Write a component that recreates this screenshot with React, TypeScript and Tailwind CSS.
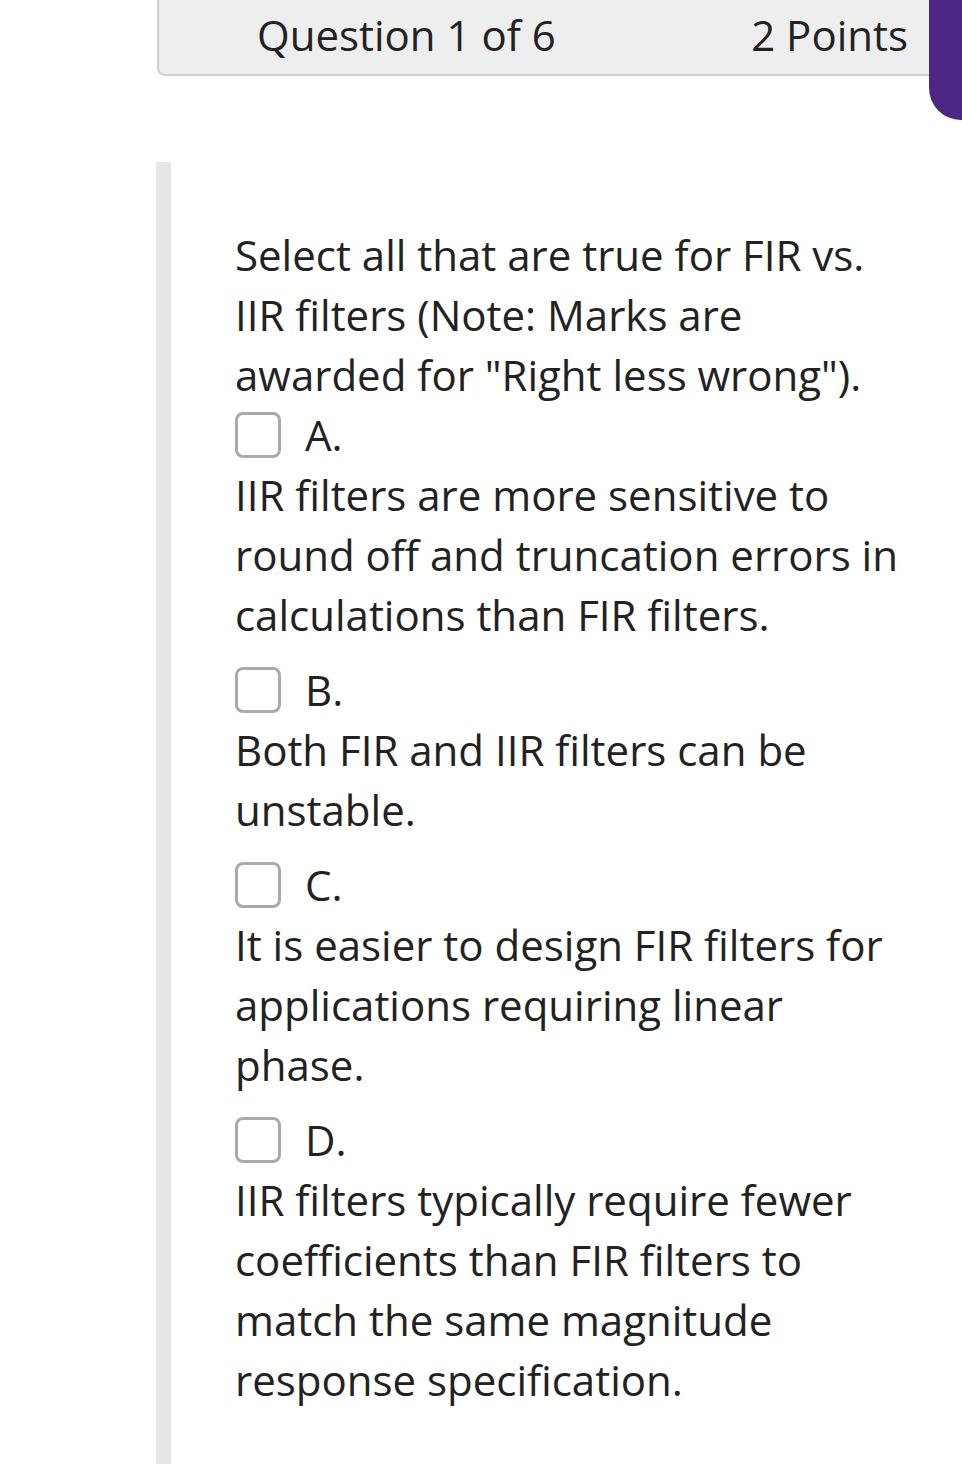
const options = [
  {
    id: 'A',
    text: 'IIR filters are more sensitive to round off and truncation errors in calculations than FIR filters.',
  },
  { id: 'B', text: 'Both FIR and IIR filters can be unstable.' },
  {
    id: 'C',
    text: 'It is easier to design FIR filters for applications requiring linear phase.',
  },
  {
    id: 'D',
    text: 'IIR filters typically require fewer coefficients than FIR filters to match the same magnitude response specification.',
  },
];

export default function App() {
  return (
    <div
      className="relative w-[962px] h-[1464px] overflow-hidden bg-white text-[#222222]"
      style={{ fontFamily: '"Open Sans", "Noto Sans", sans-serif' }}
    >
      {/* Header */}
      <div className="ml-[157px] -mt-[4px] h-[80px] flex items-center justify-between pl-[98px] pr-[52px] bg-[#eeeeee] border-2 border-t-0 border-[#cfcfcf] rounded-bl-[8px]">
        <span className="text-[42px] leading-none">Question 1 of 6</span>
        <span className="text-[42px] leading-none">2 Points</span>
      </div>

      {/* Purple tab */}
      <div className="absolute top-0 right-0 w-[33px] h-[120px] bg-[#4e2785] rounded-bl-[32px]" />

      {/* Body */}
      <div className="flex mt-[86px]">
        <div className="ml-[156px] w-[15px] h-[1400px] bg-[#e6e6e6]" />
        <div className="pl-[64px] pt-[63px] pr-[57px] flex-1 text-[42px] leading-[60px]">
          <p>Select all that are true for FIR vs. IIR filters (Note: Marks are awarded for "Right less wrong").</p>
          <div className="flex flex-col gap-[15px]">
            {options.map((o) => (
              <div key={o.id}>
                <div className="flex items-center h-[60px]">
                  <span className="w-[46px] h-[46px] rounded-[8px] border-[3px] border-[#aaaaaa] bg-white" />
                  <span className="ml-[24px]">{o.id}.</span>
                </div>
                <p>{o.text}</p>
              </div>
            ))}
          </div>
        </div>
      </div>
    </div>
  );
}
